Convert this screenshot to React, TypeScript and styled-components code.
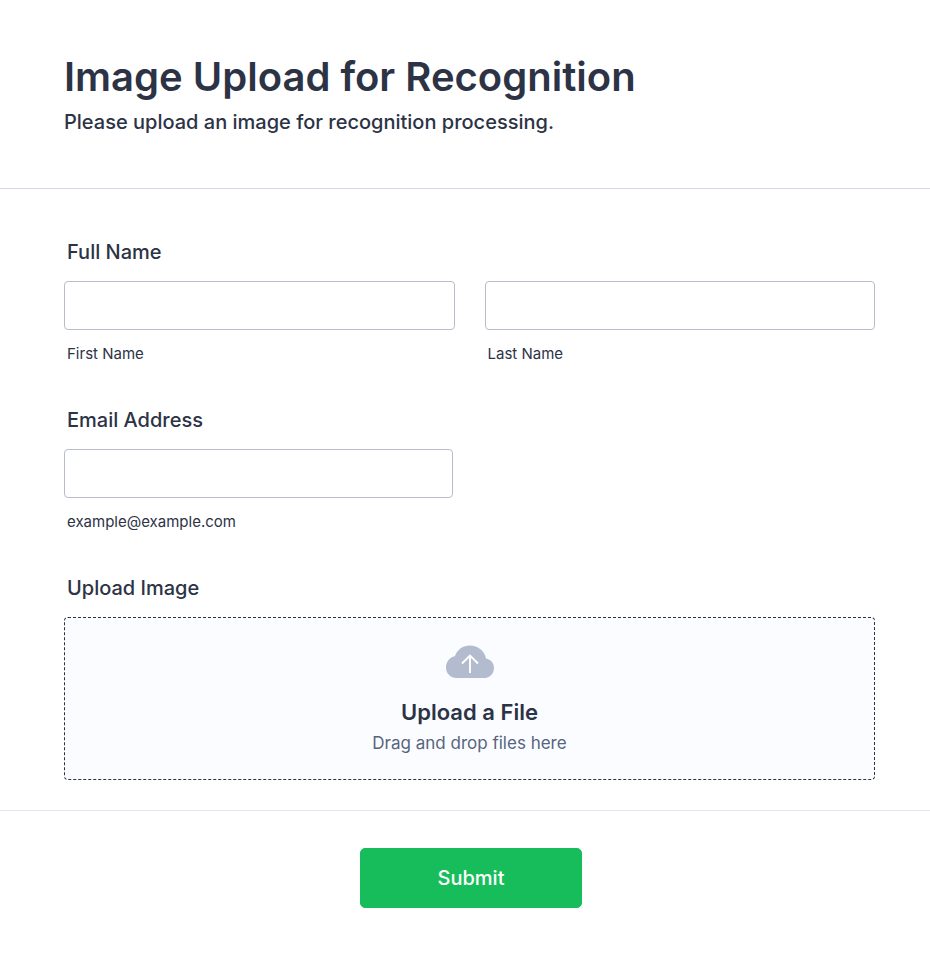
import React from "react";
import styled, { createGlobalStyle } from "styled-components";

const GlobalStyle = createGlobalStyle`
  *, *::before, *::after { box-sizing: border-box; }
  body {
    margin: 0;
    background: #fff;
    color: #2c3345;
    font-family: Inter, "Liberation Sans", sans-serif;
  }
`;

const Form = styled.form`
  width: 100%;
`;

const Header = styled.header`
  padding: 52px 55px 54px 64px;
  border-bottom: 1px solid #d7d8e6;
`;

const Title = styled.h1`
  margin: 0;
  font-size: 40px;
  line-height: 50px;
  font-weight: 600;
`;

const Subtitle = styled.p`
  margin: 8px 0 0;
  font-size: 20px;
  line-height: 24px;
  font-weight: 500;
`;

const Fields = styled.div`
  display: flex;
  flex-direction: column;
  gap: 43px;
  padding: 50px 55px 30px 64px;
`;

const Field = styled.div`
  display: flex;
  flex-direction: column;
  gap: 16px;
`;

const Group = styled.fieldset`
  display: flex;
  flex-direction: column;
  margin: 0;
  padding: 0;
  border: 0;
  min-width: 0;
`;

const Legend = styled.legend`
  margin-bottom: 16px;
  padding: 0 3px;
  font-size: 20px;
  line-height: 26px;
  font-weight: 500;
`;

const Label = styled.label`
  padding: 0 3px;
  font-size: 20px;
  line-height: 26px;
  font-weight: 500;
`;

const Columns = styled.div`
  display: grid;
  grid-template-columns: 1fr 1fr;
  gap: 30px;
`;

const Control = styled.div<{ $half?: boolean }>`
  display: flex;
  flex-direction: column;
  gap: 14px;
  width: ${({ $half }) => ($half ? "48%" : "100%")};
`;

const TextInput = styled.input`
  width: 100%;
  height: 49px;
  padding: 0 12px;
  border: 1px solid #b8bdc9;
  border-radius: 4px;
  background: #fff;
  color: inherit;
  font: inherit;
  font-size: 20px;
`;

const SubLabel = styled.label`
  padding: 0 3px;
  font-size: 15px;
  line-height: 20px;
`;

const DropZone = styled.label`
  display: flex;
  flex-direction: column;
  align-items: center;
  padding: 27px 16px 24px;
  border: 1px dashed #2c3345;
  border-radius: 4px;
  background: #fbfcff;
  cursor: pointer;
`;

const FileInput = styled.input`
  position: absolute;
  width: 1px;
  height: 1px;
  overflow: hidden;
  opacity: 0;
`;

const DropTitle = styled.span`
  margin-top: 20px;
  font-size: 22px;
  line-height: 28px;
  font-weight: 600;
`;

const DropHint = styled.span`
  margin-top: 5px;
  color: #57647e;
  font-size: 17px;
  line-height: 24px;
`;

const Footer = styled.footer`
  display: flex;
  justify-content: center;
  padding: 37px 52px 49px 64px;
  border-top: 1px solid #e3e5f0;
`;

const SubmitButton = styled.button`
  width: 222px;
  height: 60px;
  border: 1px solid #18bd5b;
  border-radius: 5px;
  background: #18bd5b;
  color: #fff;
  font: inherit;
  font-size: 20px;
  font-weight: 500;
  cursor: pointer;
`;

function CloudIcon() {
  return (
    <svg width="48" height="33" viewBox="0 0 48 33" fill="none" aria-hidden="true">
      <path
        d="M10.5 33C4.7 33 0 28.4 0 22.5C0 16.9 3.7 12.2 8.8 11.3C11.2 4.5 17.1 0.5 24 0.5C32 0.5 38.6 6 40 13.5C44.6 14.3 48 18.3 48 22.9C48 28.5 43.5 33 38 33Z"
        fill="#b3bbcf"
      />
      <path d="M24 28V10.5M16 18.5L24 10.5L32 18.5" stroke="#fff" strokeWidth="1.9" />
    </svg>
  );
}

export default function App() {
  return (
    <>
      <GlobalStyle />
      <Form onSubmit={(event) => event.preventDefault()}>
        <Header>
          <Title>Image Upload for Recognition</Title>
          <Subtitle>Please upload an image for recognition processing.</Subtitle>
        </Header>
        <Fields>
          <Group>
            <Legend>Full Name</Legend>
            <Columns>
              <Control>
                <TextInput id="first-name" type="text" autoComplete="given-name" />
                <SubLabel htmlFor="first-name">First Name</SubLabel>
              </Control>
              <Control>
                <TextInput id="last-name" type="text" autoComplete="family-name" />
                <SubLabel htmlFor="last-name">Last Name</SubLabel>
              </Control>
            </Columns>
          </Group>
          <Field>
            <Label htmlFor="email">Email Address</Label>
            <Control $half>
              <TextInput id="email" type="email" autoComplete="email" />
              <SubLabel htmlFor="email">example@example.com</SubLabel>
            </Control>
          </Field>
          <Field>
            <Label htmlFor="image-file">Upload Image</Label>
            <DropZone>
              <FileInput id="image-file" type="file" accept="image/*" />
              <CloudIcon />
              <DropTitle>Upload a File</DropTitle>
              <DropHint>Drag and drop files here</DropHint>
            </DropZone>
          </Field>
        </Fields>
        <Footer>
          <SubmitButton type="submit">Submit</SubmitButton>
        </Footer>
      </Form>
    </>
  );
}
